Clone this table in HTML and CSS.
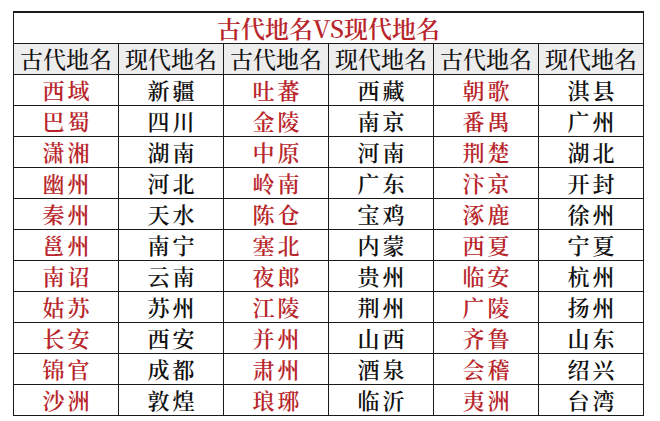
FILE: index.html
```html
<!DOCTYPE html>
<html lang="zh">
<head>
<meta charset="utf-8">
<link rel="stylesheet" href="styles.css">
</head>
<body>
<table class="places">
  <tr class="title-row"><td colspan="6" class="title">古代地名VS现代地名</td></tr>
  <tr class="head-row">
    <th>古代地名</th><th>现代地名</th><th>古代地名</th><th>现代地名</th><th>古代地名</th><th>现代地名</th>
  </tr>
  <tr><td class="old">西域</td><td>新疆</td><td class="old">吐蕃</td><td>西藏</td><td class="old">朝歌</td><td>淇县</td></tr>
  <tr><td class="old">巴蜀</td><td>四川</td><td class="old">金陵</td><td>南京</td><td class="old">番禺</td><td>广州</td></tr>
  <tr><td class="old">潇湘</td><td>湖南</td><td class="old">中原</td><td>河南</td><td class="old">荆楚</td><td>湖北</td></tr>
  <tr><td class="old">幽州</td><td>河北</td><td class="old">岭南</td><td>广东</td><td class="old">汴京</td><td>开封</td></tr>
  <tr><td class="old">秦州</td><td>天水</td><td class="old">陈仓</td><td>宝鸡</td><td class="old">涿鹿</td><td>徐州</td></tr>
  <tr><td class="old">邕州</td><td>南宁</td><td class="old">塞北</td><td>内蒙</td><td class="old">西夏</td><td>宁夏</td></tr>
  <tr><td class="old">南诏</td><td>云南</td><td class="old">夜郎</td><td>贵州</td><td class="old">临安</td><td>杭州</td></tr>
  <tr><td class="old">姑苏</td><td>苏州</td><td class="old">江陵</td><td>荆州</td><td class="old">广陵</td><td>扬州</td></tr>
  <tr><td class="old">长安</td><td>西安</td><td class="old">并州</td><td>山西</td><td class="old">齐鲁</td><td>山东</td></tr>
  <tr><td class="old">锦官</td><td>成都</td><td class="old">肃州</td><td>酒泉</td><td class="old">会稽</td><td>绍兴</td></tr>
  <tr><td class="old">沙洲</td><td>敦煌</td><td class="old">琅琊</td><td>临沂</td><td class="old">夷洲</td><td>台湾</td></tr>
</table>
</body>
</html>
```

FILE: styles.css
```css
html, body {
  margin: 0;
  padding: 0;
  background: #ffffff;
}

body {
  font-family: "Noto Serif CJK SC", "Noto Sans CJK SC", serif;
  color: #111111;
}

.places {
  border-collapse: collapse;
  margin: 11px 0 0 13px;
  table-layout: fixed;
  width: 631px;
}

.places td,
.places th {
  border: 1px solid #1a1a1a;
  height: 30px;
  padding: 0;
  text-align: center;
  vertical-align: middle;
  font-size: 22px;
  line-height: 30px;
  font-weight: 600;
  letter-spacing: 3px;
  text-indent: 3px;
}

.places .title {
  color: #b8262b;
  font-size: 24px;
  font-weight: 600;
  letter-spacing: 0;
  text-indent: 0;
  border-top-width: 2px;
}

.head-row th {
  background: #ededed;
  font-size: 23px;
  font-weight: 500;
  letter-spacing: 0;
  text-indent: 0;
  color: #111111;
}

.places .old {
  color: #b8262b;
}
```
